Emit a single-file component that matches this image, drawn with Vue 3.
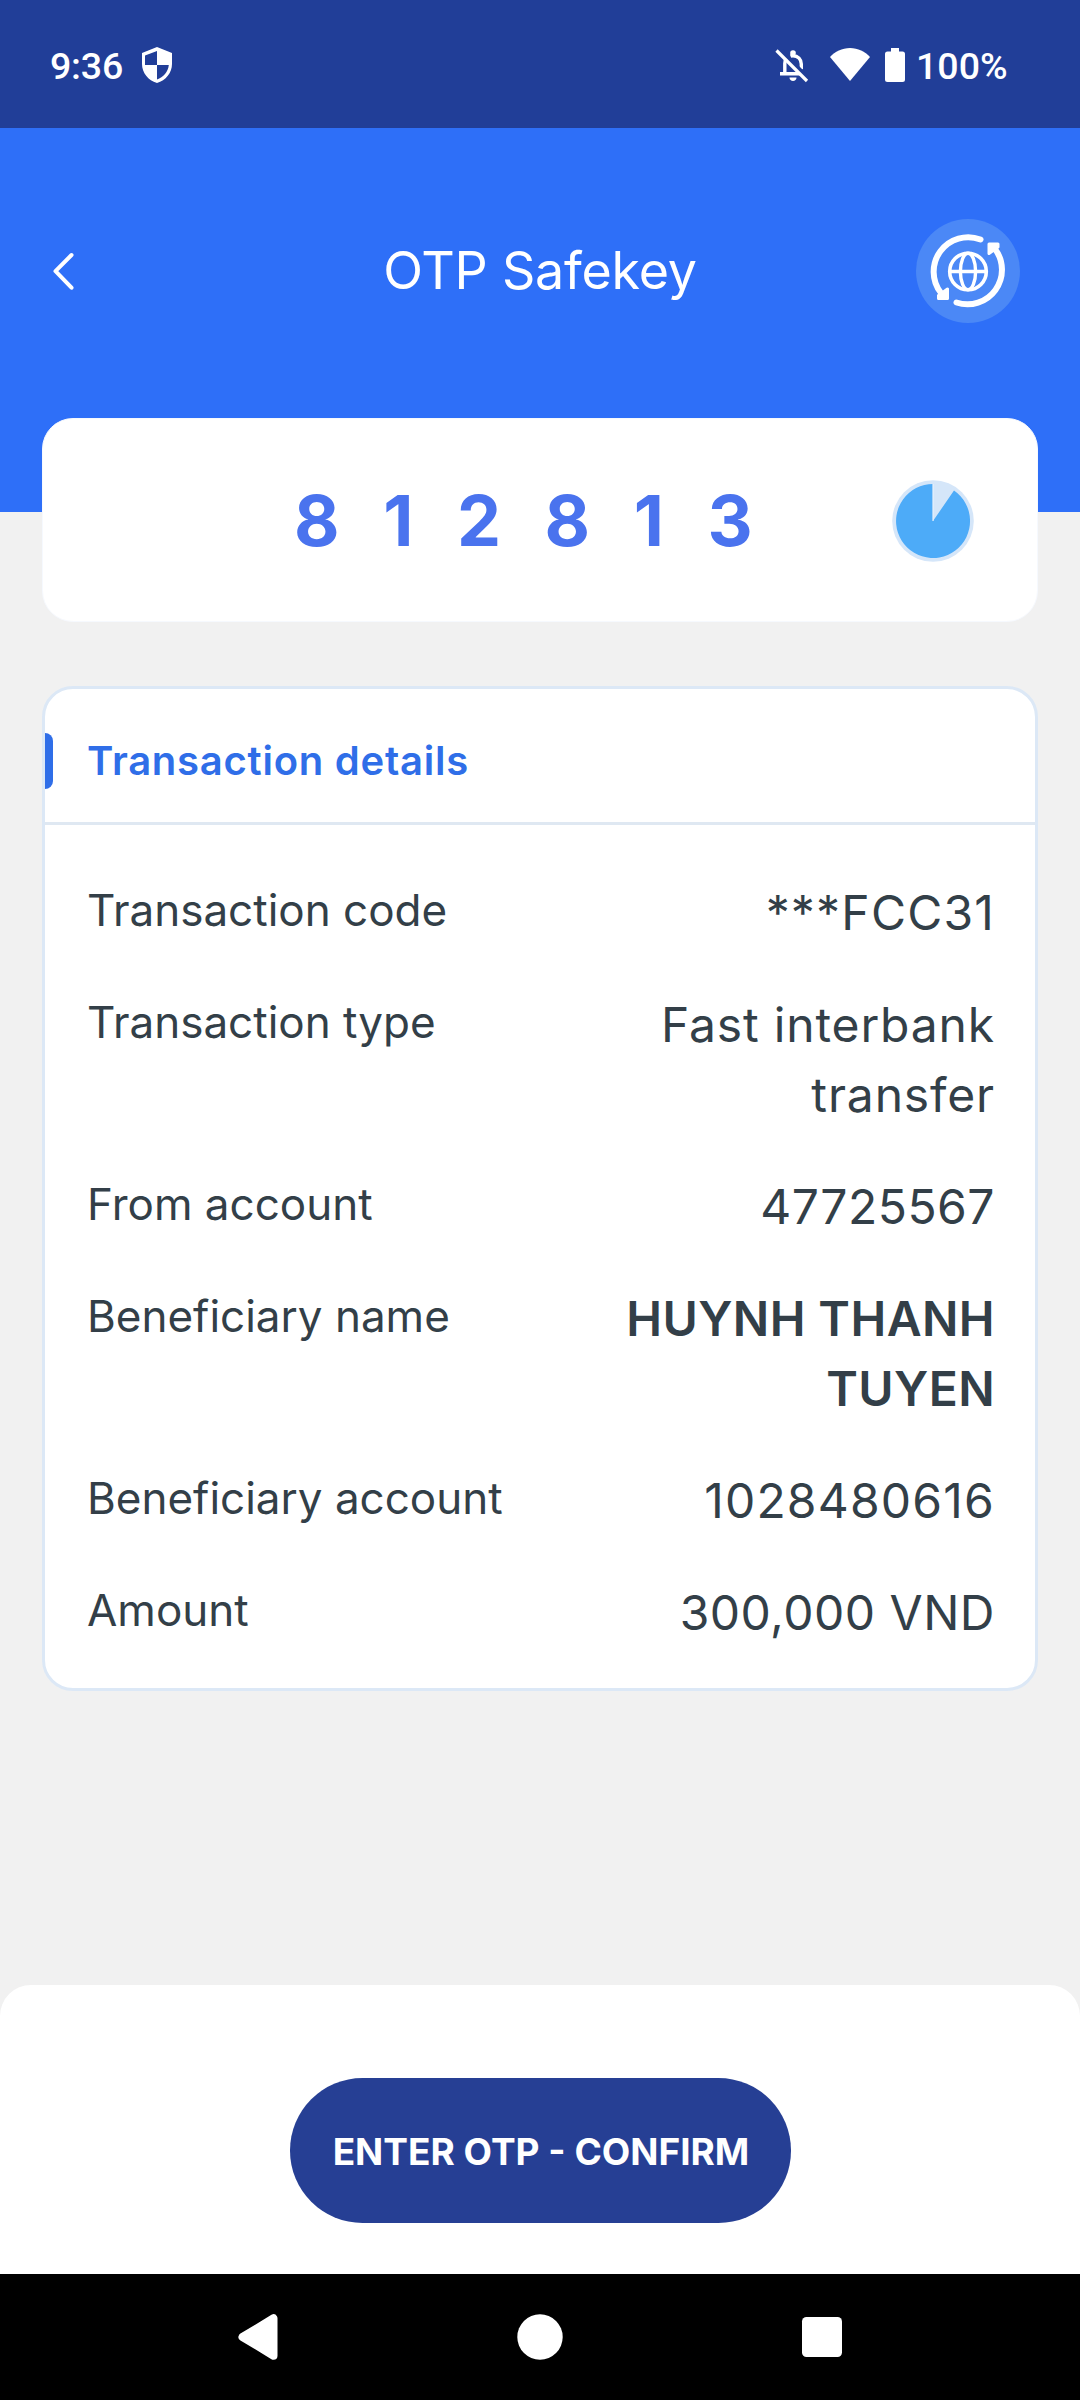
<script setup>
const otp = '812813'.split('').join(' ')

const details = [
  { label: 'Transaction code', value: '***FCC31', tracking: 'wide' },
  { label: 'Transaction type', value: 'Fast interbank transfer' },
  { label: 'From account', value: '47725567', tracking: 'tight' },
  { label: 'Beneficiary name', value: 'HUYNH THANH TUYEN', tracking: 'strong' },
  { label: 'Beneficiary account', value: '1028480616', tracking: 'wide' },
  { label: 'Amount', value: '300,000 VND', tracking: 'tight' },
]
</script>

<template>
  <div class="screen">
    <div class="status-bar">
      <span class="clock">9:36</span>
      <svg class="shield" width="30" height="36" viewBox="0 0 30 36">
        <path fill="#fff" fill-rule="evenodd" d="M15 0 30 6v11c0 8.8-6.2 16.500-15 19C6.200 33.500 0 25.800 0 17V6ZM15 4 3 8.500V18h12ZM15 18v14.500c6.300-2 11.200-8 11.800-14.500Z" />
      </svg>
      <div class="status-right">
        <svg class="bell" width="34" height="34" viewBox="0 0 34 34" fill="none" stroke="#fff">
          <path stroke-width="3.400" d="M9.800 25V14.500c0-2 .3-3.400 1.200-4.800M5 24.800H25M15.500 7.200c1-.4 1.500-.5 2.500-.5 5 0 8.300 3.800 8.300 8.300v5.200" />
          <circle cx="18" cy="4" r="2.800" fill="#fff" stroke="none" />
          <path fill="#fff" stroke="none" d="M14.500 28.500h7c0 2-1.500 3.500-3.500 3.500s-3.500-1.500-3.500-3.500Z" />
          <path stroke="#213e98" stroke-width="3" d="m4.500-1 30 31" />
          <path stroke-width="3.200" d="m1.500 1.500 30.500 30.500" />
        </svg>
        <svg class="wifi" width="40" height="33" viewBox="0 0 40 33">
          <path fill="#fff" d="M20 33 0 9C5 3.500 12 0 20 0s15 3.500 20 9Z" />
        </svg>
        <svg class="battery" width="20" height="34" viewBox="0 0 20 34">
          <path fill="#fff" d="M6 0h8v3.500h3.500A2.500 2.500 0 0 1 20 6v25.500a2.500 2.500 0 0 1-2.500 2.500h-15A2.500 2.500 0 0 1 0 31.500V6a2.500 2.500 0 0 1 2.500-2.500H6Z" />
        </svg>
        <span class="charge">100%</span>
      </div>
    </div>

    <header class="header">
      <svg class="back" width="60" height="60" viewBox="0 0 60 60" fill="none" stroke="#fff" stroke-width="4" stroke-linecap="round" stroke-linejoin="round">
        <path d="M38.500 14 22.500 30.200l16 16.500" />
      </svg>
      <h1 class="title">OTP Safekey</h1>
      <div class="sync">
        <svg width="104" height="104" viewBox="0 0 104 104" fill="none" stroke="#fff">
          <path stroke-width="6" stroke-linecap="round" d="M64.500 20.500A34.500 34.500 0 0 0 25 74" />
          <path stroke-width="6" stroke-linecap="round" d="M40.500 83.500A34.500 34.500 0 0 0 79 30" />
          <path fill="#fff" stroke-width="3" stroke-linejoin="round" d="M73 25h9v3l-9 6.500Z M31.500 79.500h-9v-3l9-6.500Z" />
          <circle cx="52" cy="52.500" r="18.300" stroke-width="3.600" />
          <ellipse cx="52" cy="52.500" rx="7.600" ry="18.300" stroke-width="3.400" />
          <path stroke-width="3.600" d="M34 52.500h36" />
        </svg>
      </div>
    </header>

    <main class="content">
      <section class="otp-card">
        <span class="otp">{{ otp }}</span>
        <svg class="timer" width="82" height="84" viewBox="0 0 82 84">
          <ellipse cx="41" cy="42" rx="40.800" ry="40.800" fill="#d5e6f9" />
          <path fill="#4dabf8" d="M41 42V5a37 37 0 1 0 21 6.500Z" />
          <path fill="none" stroke="#e8f1fc" stroke-width="1.200" d="M41 42V5" />
        </svg>
      </section>

      <section class="details">
        <div class="details-head">
          <span class="marker"></span>
          <h2>Transaction details</h2>
        </div>
        <dl class="rows">
          <div v-for="row in details" :key="row.label" class="row">
            <dt>{{ row.label }}</dt>
            <dd :class="row.tracking">{{ row.value }}</dd>
          </div>
        </dl>
      </section>
    </main>

    <footer class="footer">
      <button class="confirm" type="button">ENTER OTP - CONFIRM</button>
    </footer>

    <nav class="nav-bar">
      <svg width="48" height="48" viewBox="0 0 48 48">
        <path fill="#fff" stroke="#fff" stroke-width="8" stroke-linejoin="round" d="M39.500 5.300V42.700L8.500 24Z" />
      </svg>
      <svg width="48" height="48" viewBox="0 0 48 48"><circle cx="24" cy="24" r="22.700" fill="#fff" /></svg>
      <svg width="48" height="48" viewBox="0 0 48 48"><rect x="4" y="4" width="40" height="40" rx="4.500" fill="#fff" /></svg>
    </nav>
  </div>
</template>

<style>
body {
  margin: 0;
}
</style>

<style scoped>
.screen {
  display: flex;
  flex-direction: column;
  width: 1080px;
  height: 2400px;
  overflow: hidden;
  background: #f1f1f1;
  font-family: Inter, "Liberation Sans", sans-serif;
  color: #333f48;
}

.status-bar {
  display: flex;
  align-items: center;
  height: 128px;
  box-sizing: border-box;
  padding: 3px 74px 0 50px;
  background: #213e98;
  color: #fff;
  font: 500 37.5px/44px Roboto, sans-serif;
}

.clock {
  width: 92px;
  letter-spacing: -0.2px;
}

.shield {
  margin-bottom: 2px;
}

.status-right {
  display: flex;
  align-items: center;
  margin-left: auto;
}

.wifi {
  margin: 0 0 2px 21px;
}

.battery {
  margin: 0 0 1px 15px;
}

.charge {
  width: 90px;
  margin-left: 11px;
}

.header {
  display: grid;
  grid-template-columns: 104px 1fr 104px;
  align-items: center;
  height: 384px;
  box-sizing: border-box;
  padding: 0 60px 98px;
  background: #2e6ff8;
}

.back {
  margin-left: -27px;
}

.title {
  margin: 0;
  color: #fff;
  text-align: center;
  font-size: 52px;
  font-weight: 400;
  line-height: 64px;
  letter-spacing: -0.23px;
}

.sync {
  width: 104px;
  height: 104px;
  border-radius: 50%;
  background: #4b88f6;
}

.content {
  flex: 1;
  padding: 0 42px;
  margin-top: -94px;
}

.otp-card {
  display: flex;
  align-items: center;
  justify-content: space-between;
  height: 204px;
  box-sizing: border-box;
  padding: 2px 63px 0 251px;
  border: 1px solid #f6f9fe;
  border-radius: 31px;
  background: #fff;
}

.otp {
  color: #4a73ee;
  font-size: 70px;
  font-weight: 700;
  line-height: 84px;
  letter-spacing: 13.5px;
  white-space: nowrap;
}

.details {
  height: 1005px;
  box-sizing: border-box;
  margin-top: 64px;
  border: 3px solid #dce8f6;
  border-radius: 31px;
  background: #fff;
}

.details-head {
  display: flex;
  align-items: center;
  height: 133px;
  padding-top: 10px;
  box-sizing: border-box;
}

.marker {
  width: 8px;
  height: 56px;
  margin-right: 34px;
  border-radius: 0 8px 8px 0;
  background: #2f6ee8;
}

h2 {
  margin: 0;
  color: #2f6ee8;
  font-size: 40px;
  font-weight: 600;
  line-height: 56px;
  letter-spacing: 0.75px;
}

.rows {
  display: flex;
  flex-direction: column;
  gap: 42px;
  margin: 0;
  padding: 53px 40px 0 42px;
  border-top: 3px solid #dfe8f2;
}

.row {
  display: flex;
  justify-content: space-between;
}

dt {
  font-size: 44px;
  line-height: 64px;
}

dd {
  width: 400px;
  margin: 0;
  text-align: right;
  font-size: 48px;
  line-height: 70px;
  letter-spacing: 0.85px;
}

.wide {
  letter-spacing: 1.2px;
}

.tight {
  letter-spacing: 0.5px;
}

.strong {
  font-weight: 600;
  letter-spacing: 0.4px;
}

.footer {
  display: flex;
  justify-content: center;
  height: 289px;
  box-sizing: border-box;
  padding-top: 93px;
  border-radius: 31px 31px 0 0;
  background: #fff;
}

.confirm {
  width: 501px;
  height: 145px;
  padding: 3px 0 0 2px;
  border: 0;
  border-radius: 73px;
  background: #263f94;
  color: #fff;
  font: 700 37px/48px Inter, "Liberation Sans", sans-serif;
  letter-spacing: 0;
}

.nav-bar {
  display: flex;
  align-items: center;
  justify-content: space-between;
  height: 126px;
  box-sizing: border-box;
  padding: 0 234px;
  background: #000;
}
</style>
